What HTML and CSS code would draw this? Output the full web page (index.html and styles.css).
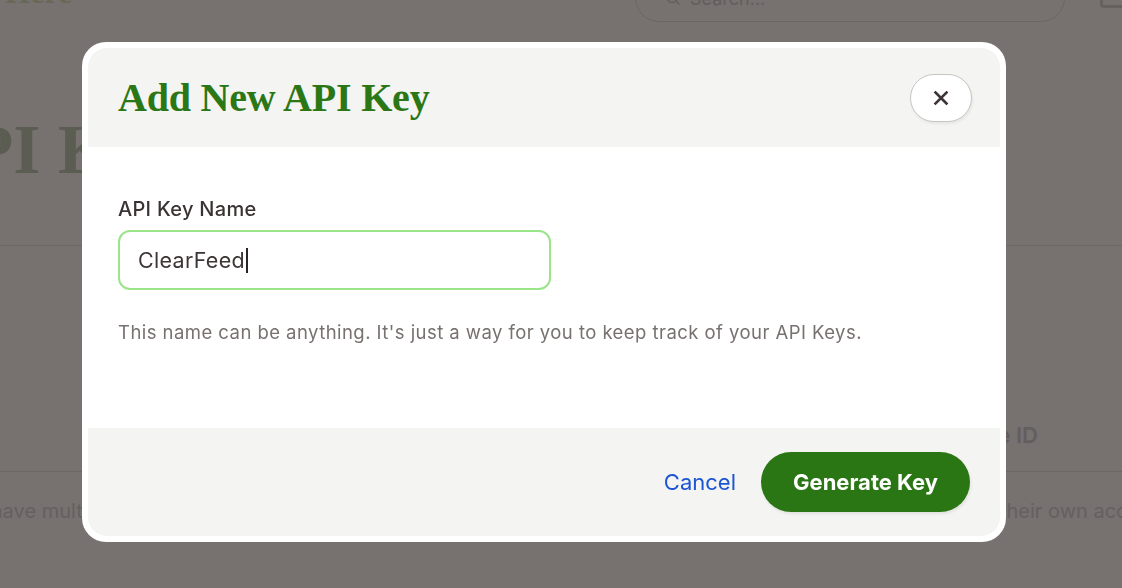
FILE: index.html
```html
<!DOCTYPE html>
<html lang="en">
<head>
<meta charset="utf-8">
<title>Add New API Key</title>
<link rel="stylesheet" href="styles.css">
</head>
<body>
<div class="page">
  <header class="topbar">
    <div class="brand">Logo Here</div>
    <div class="search">
      <svg class="search-ico" width="18" height="18" viewBox="0 0 24 24" fill="none" stroke="currentColor" stroke-width="2" stroke-linecap="round"><circle cx="11" cy="11" r="7"/><path d="M20 20l-4-4"/></svg>
      <span>Search...</span>
    </div>
    <div class="tb-icon"></div>
  </header>
  <div class="title-row">
    <h1 class="page-title">API Keys</h1>
  </div>
  <div class="table">
    <div class="thead">
      <span class="th">Name</span>
      <span class="th">Workspace ID</span>
    </div>
    <div class="notes">
      <p class="note">You can have multiple API keys for different integrations.</p>
      <p class="note note-right">their own account</p>
    </div>
  </div>
</div>

<div class="backdrop">
  <div class="modal" role="dialog" aria-labelledby="dlg-title">
    <div class="modal-inner">
      <div class="modal-head">
        <h2 id="dlg-title" class="modal-title">Add New API Key</h2>
        <button class="close-btn" aria-label="Close">
          <svg width="16" height="16" viewBox="0 0 16 16" fill="none" stroke="#3d3535" stroke-width="2.6" stroke-linecap="square"><path d="M2.5 2.5l11 11M13.5 2.5l-11 11"/></svg>
        </button>
      </div>
      <div class="modal-body">
        <label class="field-label">API Key Name</label>
        <div class="field">ClearFeed<span class="caret"></span></div>
        <p class="help">This name can be anything. It's just a way for you to keep track of your API Keys.</p>
      </div>
      <div class="modal-foot">
        <button class="btn-cancel">Cancel</button>
        <button class="btn-primary">Generate Key</button>
      </div>
    </div>
  </div>
</div>
</body>
</html>
```

FILE: styles.css
```css
* { box-sizing: border-box; }
html, body { margin: 0; padding: 0; }
body {
  width: 1122px;
  height: 588px;
  overflow: hidden;
  background: #ffffff;
  font-family: Inter, "Noto Sans", "Liberation Sans", sans-serif;
}

/* ---------- underlying page ---------- */
.page {
  margin-left: -80px;
  width: 1280px;
}
.topbar {
  display: flex;
  align-items: flex-start;
  height: 60px;
  margin-top: -26px;
}
.brand {
  width: 715px;
  padding: 2px 0 0 8px;
  font-family: "Liberation Serif", serif;
  font-weight: 700;
  font-size: 32px;
  line-height: 32px;
  color: #d8ecc0;
}
.search {
  width: 430px;
  height: 48px;
  border: 1px solid #e2e2e2;
  border-radius: 24px;
  display: flex;
  align-items: center;
  gap: 8px;
  padding-left: 28px;
  color: #cfcfcf;
  font-size: 18px;
}
.search-ico { color: #cfcfcf; }
.tb-icon {
  margin-left: 35px;
  margin-top: 10px;
  width: 26px;
  height: 24px;
  border: 3px solid #d6d6d6;
  border-radius: 4px;
}
.title-row {
  height: 212px;
  border-bottom: 1px solid #e6e7e8;
  display: flex;
  align-items: flex-start;
}
.page-title {
  margin: 76px 0 0 0;
  font-family: "Liberation Serif", serif;
  font-weight: 700;
  font-size: 70px;
  line-height: 80px;
  color: #bcd0b8;
}
.table { padding-top: 176px; }
.thead {
  display: flex;
  justify-content: space-between;
  padding: 0 162px 0 0;
  height: 50px;
  border-bottom: 1px solid #e6e7e8;
}
.th {
  font-size: 22px;
  font-weight: 600;
  color: #d0d1d4;
}
.th:first-child { visibility: hidden; }
.notes {
  display: flex;
  justify-content: space-between;
  margin-top: 27px;
}
.note {
  margin: 0;
  font-size: 20px;
  color: #d6d6d8;
  white-space: nowrap;
}
.note:first-child { margin-left: -11px; }
.note-right { width: 200px; }

/* ---------- modal ---------- */
.backdrop {
  position: fixed;
  inset: 0;
  background: rgba(20, 10, 8, 0.58);
  display: flex;
  align-items: flex-start;
  justify-content: flex-start;
  padding: 42px 0 0 82px;
}
.modal {
  width: 924px;
  height: 500px;
  padding: 6px;
  background: #ffffff;
  border-radius: 24px;
}
.modal-inner {
  height: 100%;
  border-radius: 19px;
  overflow: hidden;
  display: flex;
  flex-direction: column;
  background: #ffffff;
}
.modal-head {
  height: 99px;
  flex: none;
  background: #f4f4f2;
  display: flex;
  align-items: center;
  justify-content: space-between;
  padding: 0 28px 0 30px;
}
.modal-title {
  margin: 0;
  font-family: "Liberation Serif", serif;
  font-weight: 700;
  font-size: 40px;
  line-height: 48px;
  color: #2b7716;
  letter-spacing: -0.2px;
}
.close-btn {
  width: 62px;
  height: 48px;
  border-radius: 24px;
  border: 1px solid #c9c5c2;
  background: #ffffff;
  box-shadow: 1px 2px 3px rgba(0,0,0,0.06);
  display: flex;
  align-items: center;
  justify-content: center;
  padding: 0;
}
.modal-body {
  flex: 1;
  padding: 50px 30px 0 30px;
  display: flex;
  flex-direction: column;
  align-items: flex-start;
}
.field-label {
  font-size: 20px;
  font-weight: 500;
  line-height: 24px;
  letter-spacing: 0.3px;
  color: #3a3333;
}
.field {
  margin-top: 9px;
  width: 433px;
  height: 60px;
  border: 2px solid #9ae489;
  border-radius: 12px;
  display: flex;
  align-items: center;
  padding-left: 18px;
  font-size: 21.5px;
  letter-spacing: 0.3px;
  color: #3d3636;
}
.caret {
  display: inline-block;
  width: 2px;
  height: 25px;
  background: #2a2424;
  margin-left: 1px;
}
.help {
  margin: 30px 0 0 0;
  font-size: 18.5px;
  line-height: 24px;
  letter-spacing: 0.45px;
  color: #77716f;
}
.modal-foot {
  height: 108px;
  flex: none;
  background: #f4f4f2;
  display: flex;
  align-items: center;
  justify-content: flex-end;
  gap: 25px;
  padding-right: 30px;
}
.btn-cancel {
  background: none;
  border: none;
  padding: 0;
  font-family: inherit;
  font-size: 22px;
  color: #1b55d4;
}
.btn-primary {
  width: 209px;
  height: 60px;
  border: none;
  border-radius: 30px;
  background: #2a7514;
  color: #ffffff;
  font-family: inherit;
  font-size: 22px;
  font-weight: 700;
  box-shadow: 1px 2px 3px rgba(0,0,0,0.08);
}
```
